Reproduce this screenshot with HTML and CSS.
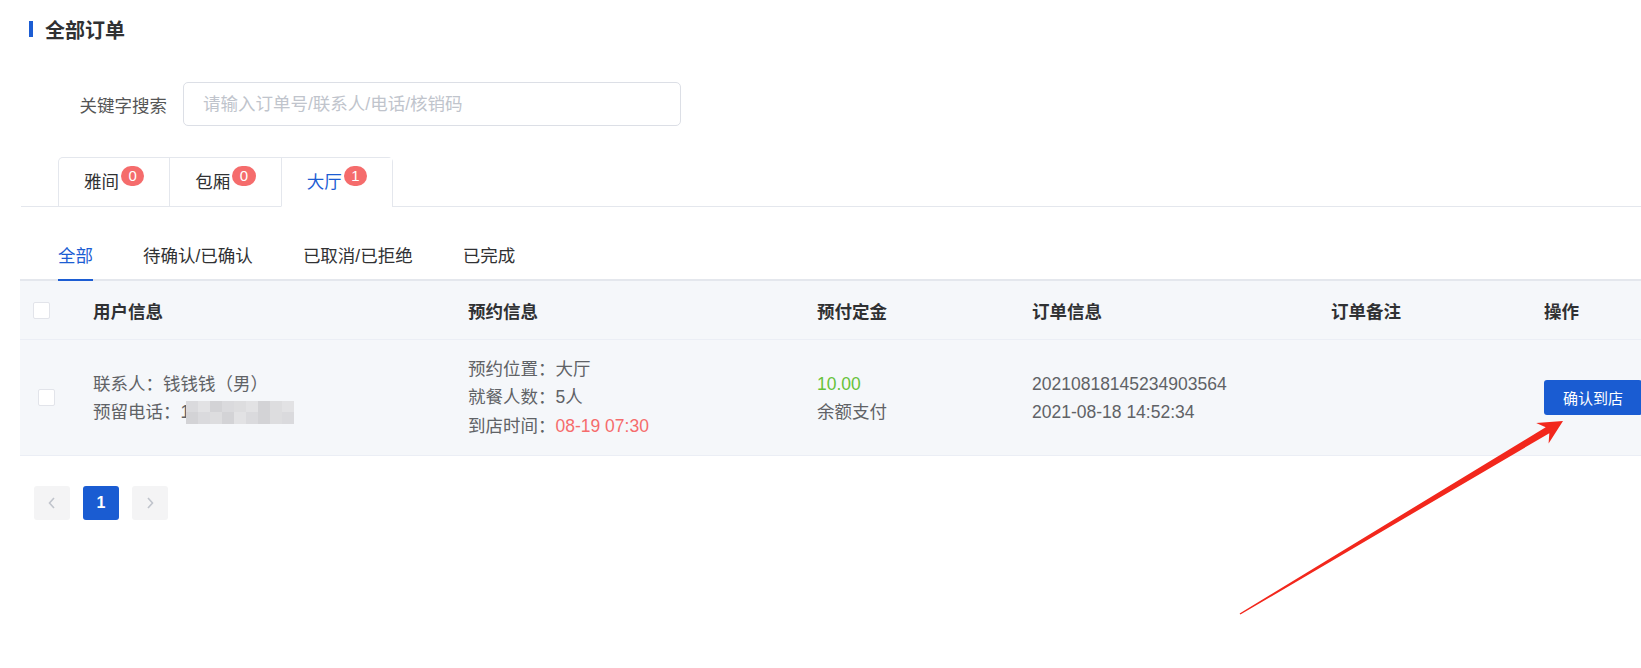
FILE: index.html
```html
<html>
  <head>
    <meta charset="utf-8" />
    <title>全部订单</title>
    <link rel="stylesheet" href="styles.css">
  </head>
  <body>
    <div class="page">
      <div class="main">
        <h1 class="title"><span class="title-bar"></span>全部订单</h1>

        <div class="search">
          <label class="search-label">关键字搜索</label>
          <input class="search-input" type="text" placeholder="请输入订单号/联系人/电话/核销码" />
        </div>

        <div class="card-tabs">
          <div class="card-nav">
            <div class="card-tab">雅间<span class="badge">0</span></div>
            <div class="card-tab">包厢<span class="badge">0</span></div>
            <div class="card-tab active">大厅<span class="badge">1</span></div>
          </div>
        </div>

        <div class="sub-tabs">
          <div class="sub-tab active">全部</div>
          <div class="sub-tab">待确认/已确认</div>
          <div class="sub-tab">已取消/已拒绝</div>
          <div class="sub-tab">已完成</div>
        </div>

        <div class="table">
          <div class="tr th">
            <div class="cell cell-check"><span class="checkbox"></span></div>
            <div class="cell">用户信息</div>
            <div class="cell">预约信息</div>
            <div class="cell">预付定金</div>
            <div class="cell">订单信息</div>
            <div class="cell">订单备注</div>
            <div class="cell">操作</div>
          </div>
          <div class="tr td">
            <div class="cell cell-check row-check"><span class="checkbox"></span></div>
            <div class="cell">
              <p>联系人：钱钱钱（男）</p>
              <p>预留电话：1<span class="mosaic"><i class="m1"></i><i class="m2"></i><i class="m3"></i><i class="m1"></i><i class="m4"></i><i class="m2"></i><i class="m3"></i><i class="m4"></i><i class="m2"></i><i class="m3"></i><i class="m1"></i><i class="m4"></i><i class="m3"></i><i class="m2"></i><i class="m1"></i><i class="m3"></i><i class="m4"></i><i class="m1"></i></span></p>
            </div>
            <div class="cell">
              <p>预约位置：大厅</p>
              <p>就餐人数：5人</p>
              <p>到店时间：<span class="red">08-19 07:30</span></p>
            </div>
            <div class="cell">
              <p class="green">10.00</p>
              <p>余额支付</p>
            </div>
            <div class="cell">
              <p>20210818145234903564</p>
              <p>2021-08-18 14:52:34</p>
            </div>
            <div class="cell"></div>
            <div class="cell">
              <button class="btn-primary">确认到店</button>
            </div>
          </div>
        </div>

        <div class="pager">
          <button class="pager-btn">
            <svg width="8" height="12" viewBox="0 0 8 12"><polyline points="6,1 1.5,6 6,11" fill="none" stroke="#c0c4cc" stroke-width="1.6" /></svg>
          </button>
          <button class="pager-btn current">1</button>
          <button class="pager-btn">
            <svg width="8" height="12" viewBox="0 0 8 12"><polyline points="2,1 6.5,6 2,11" fill="none" stroke="#c0c4cc" stroke-width="1.6" /></svg>
          </button>
        </div>
      </div>

      <svg class="arrow" width="350" height="215" viewBox="0 0 350 215">
        <polygon points="9.6,203.4 315.7,17.2 306.2,13 333,11 318.6,33.6 319.3,23.2 10.4,204.6" fill="#f2271c" />
      </svg>
    </div>
  </body>
</html>
```

FILE: styles.css
```css
body {
  margin: 0;
  background: #fff;
  font-family: "Liberation Sans", "Noto Sans CJK SC", sans-serif;
  font-size: 17.5px;
  color: #606266;
}
p {
  margin: 0;
}
.page {
  position: relative;
  width: 1641px;
  height: 668px;
  overflow: hidden;
}
.main {
  padding-left: 20px;
}
.title {
  display: flex;
  align-items: center;
  height: 22px;
  margin: 0 0 0 9px;
  padding-top: 18px;
  font-size: 20px;
  font-weight: bold;
  color: #303133;
}
.title-bar {
  width: 4px;
  height: 16px;
  background: #1c5dd3;
  margin-right: 12px;
}
.search {
  display: flex;
  align-items: center;
  margin-top: 42px;
}
.search-label {
  width: 163px;
  box-sizing: border-box;
  padding-right: 16px;
  text-align: right;
  color: #555;
}
.search-input {
  width: 498px;
  height: 44px;
  box-sizing: border-box;
  border: 1px solid #dcdfe6;
  border-radius: 5px;
  padding: 0 19px;
  font-family: "Liberation Sans", "Noto Sans CJK SC", sans-serif;
  font-size: 17.5px;
  color: #606266;
  outline: none;
}
.search-input::placeholder {
  color: #c0c4cc;
}
.card-tabs {
  margin: 31px 0 0 1px;
  border-bottom: 1px solid #e4e7ed;
}
.card-nav {
  display: flex;
  width: max-content;
  margin-left: 37px;
  border: 1px solid #e4e7ed;
  border-bottom: none;
  border-radius: 5px 5px 0 0;
}
.card-tab {
  height: 48px;
  line-height: 48px;
  padding: 0 25px;
  color: #303133;
  border-left: 1px solid #e4e7ed;
}
.card-tab:first-child {
  border-left: none;
}
.card-tab.active {
  color: #1c5dd3;
  margin-bottom: -1px;
  border-bottom: 1px solid #fff;
  background: #fff;
}
.badge {
  position: relative;
  top: -7px;
  display: inline-block;
  vertical-align: middle;
  height: 20px;
  line-height: 20px;
  padding: 0 7.5px;
  margin-left: 2px;
  border-radius: 10px;
  background: #f56c6c;
  color: #fff;
  font-size: 15px;
}
.sub-tabs {
  display: flex;
  margin-top: 24px;
  padding-left: 38px;
  box-shadow: inset 0 -2px #e4e7ed;
}
.sub-tab {
  height: 50px;
  line-height: 50px;
  padding: 0 25px;
  color: #303133;
}
.sub-tab:first-child {
  padding-left: 0;
  padding-right: 0;
  margin-right: 25px;
}
.sub-tab.active {
  color: #1c5dd3;
  box-shadow: inset 0 -2px #1c5dd3;
}
.table {
  width: 100%;
}
.tr {
  display: grid;
  grid-template-columns: 61px 375px 349px 215px 299px 213px 1fr;
  align-items: center;
  background: #f5f7fa;
  border-bottom: 1px solid #ebeef5;
}
.th {
  height: 58px;
  font-weight: bold;
  color: #303133;
}
.td {
  height: 115px;
  line-height: 28px;
}
.td .cell:nth-child(3) {
  line-height: 28.5px;
}
.cell {
  padding-left: 12px;
  white-space: nowrap;
}
.cell-check {
  padding-left: 13px;
  display: flex;
}
.row-check {
  padding-left: 18px;
}
.checkbox {
  width: 17px;
  height: 17px;
  box-sizing: border-box;
  background: #fff;
  border: 1px solid #e2e4ea;
  border-radius: 2px;
}
.mosaic {
  display: inline-grid;
  grid-template-columns: repeat(9, 12px);
  grid-template-rows: 11px 12px;
  vertical-align: middle;
  margin-left: -4px;
}
.mosaic i {
  display: block;
}
.m1 {
  background: #dadadd;
}
.m2 {
  background: #e2e2e4;
}
.m3 {
  background: #d3d3d6;
}
.m4 {
  background: #dddddf;
}
.red {
  color: #f56c6c;
}
.green {
  color: #67c23a;
}
.btn-primary {
  width: 98px;
  height: 35px;
  border: none;
  border-radius: 3px;
  background: #1a5cd2;
  color: #fff;
  font-family: "Liberation Sans", "Noto Sans CJK SC", sans-serif;
  font-size: 15px;
  padding: 0;
}
.pager {
  display: flex;
  gap: 13px;
  margin: 30px 0 0 14px;
}
.pager-btn {
  width: 36px;
  height: 34px;
  border: none;
  border-radius: 3px;
  background: #f4f4f5;
  display: flex;
  align-items: center;
  justify-content: center;
  padding: 0;
  font-family: "Liberation Sans", sans-serif;
  font-size: 16px;
  font-weight: bold;
}
.pager-btn.current {
  background: #1a5cd2;
  color: #fff;
}
.arrow {
  position: absolute;
  left: 1230px;
  top: 410px;
}
```
